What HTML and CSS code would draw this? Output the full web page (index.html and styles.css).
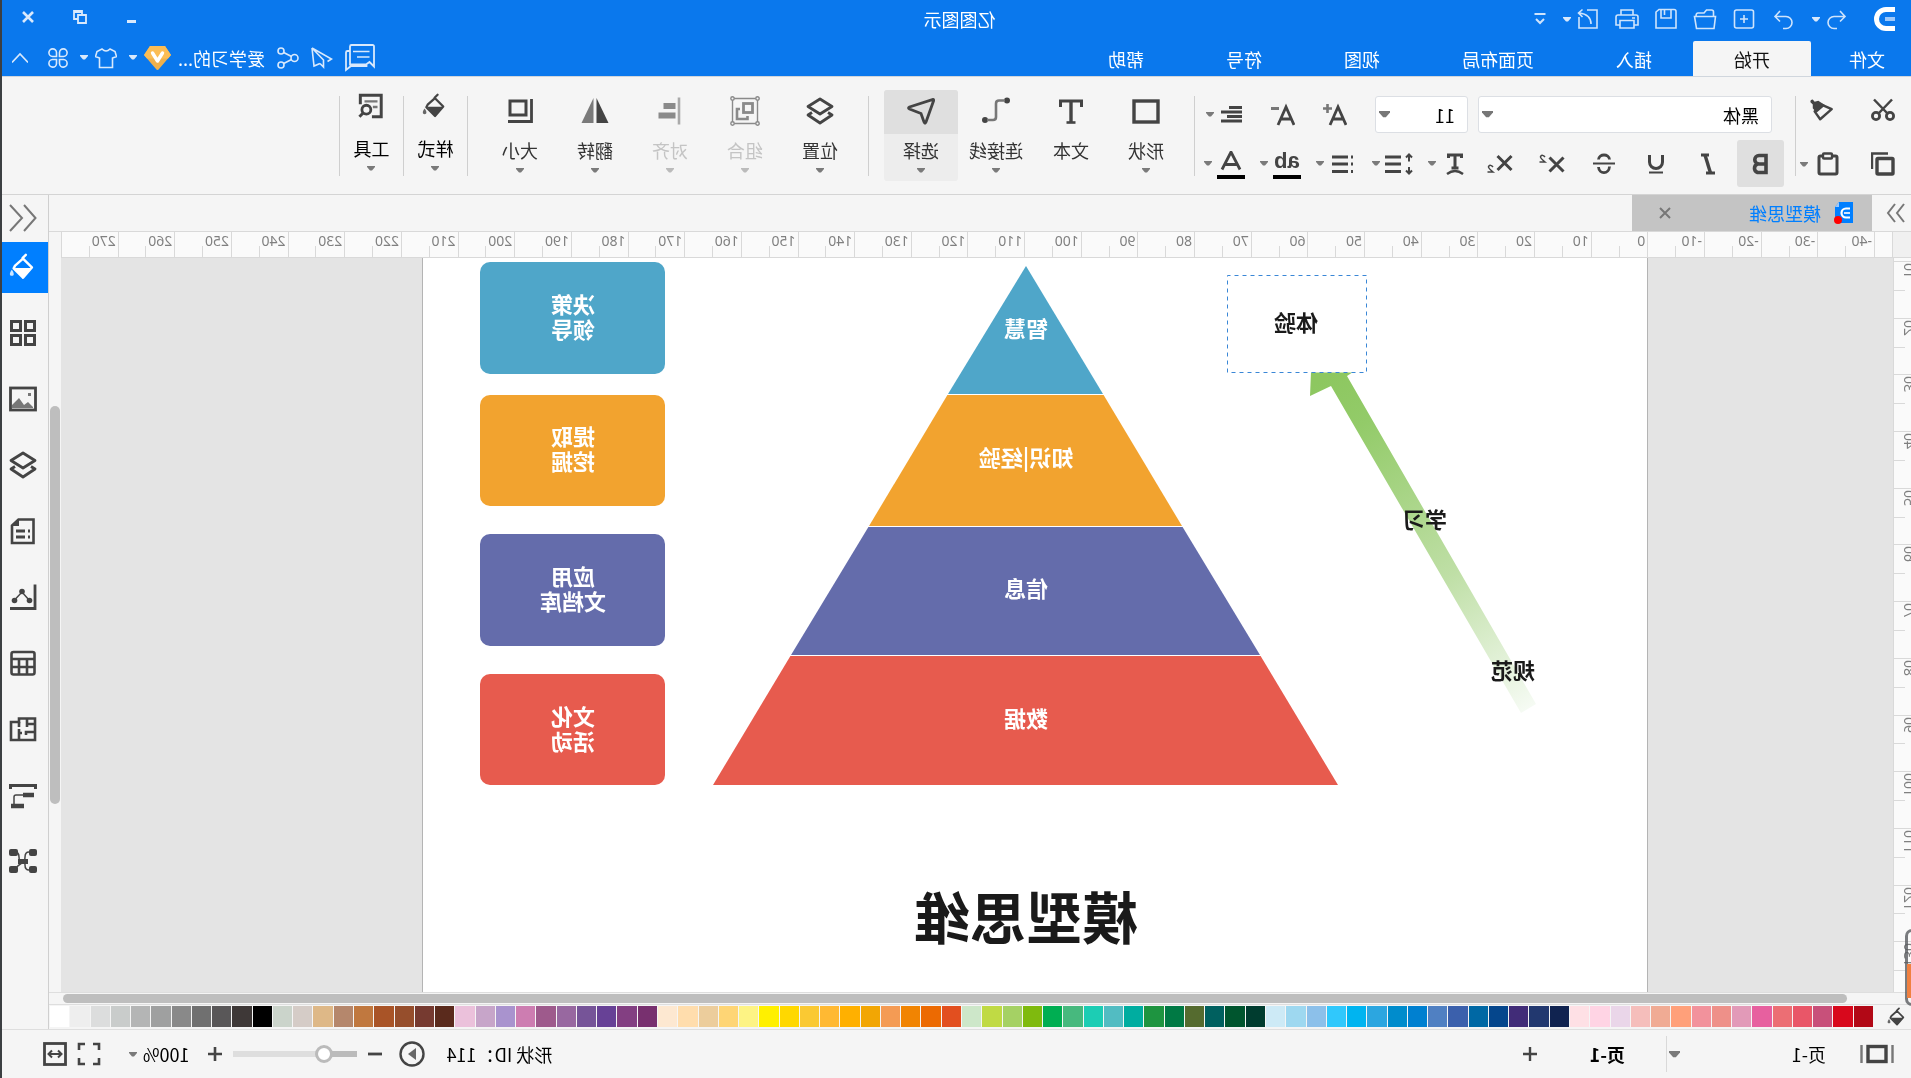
FILE: index.html
```html
<!DOCTYPE html>
<html lang="zh-CN">
<head>
<meta charset="utf-8">
<title>亿图图示</title>
<link rel="stylesheet" href="styles.css">
</head>
<body>
<svg class="defs" aria-hidden="true">
  <symbol id="caret" viewBox="0 0 8 5"><path d="M0 0H8V1L5 4.500H3L0 1Z" fill="currentColor"/></symbol>
  <symbol id="bucket" viewBox="0 0 28 30"><path d="M11 2l3.500 3.500M14 6L4.500 15.500 14 26.500 24 16.500 22.500 13.500 14 6Z" fill="none" stroke="currentColor" stroke-width="2.600" stroke-linejoin="round" stroke-linecap="round"/><path d="M5 16h18L14 27Z" fill="currentColor"/><path d="M26 18c3 4 2.500 6.500 0 6.500s-3-2.500 0-6.500Z" fill="currentColor" opacity=".8"/></symbol>
  <symbol id="layers" viewBox="0 0 28 28"><path d="M14 2L26 9.500 14 17 2 9.500Z" fill="none" stroke="currentColor" stroke-width="2.800" stroke-linejoin="round"/><path d="M6 15.500L2 18l12 8 12-8-4-2.500" fill="none" stroke="currentColor" stroke-width="2.800" stroke-linejoin="round"/></symbol>
</svg>
<div class="window">
  <header class="head">
    <div class="titlebar">
      <div class="quick">
        <svg class="logo" viewBox="0 0 22 24"><path d="M0 2.500H9A9.500 9.500 0 0 1 9 21.500H0" fill="none" stroke="#fff" stroke-width="5"/><path d="M0 12H10" stroke="#9fc9fa" stroke-width="4"/></svg>
        <div class="split"><button class="ib" aria-label="撤销"><svg viewBox="0 0 24 24"><path d="M9 4L4 9.500l5 5M4 9.500h11a6 6 0 0 1 0 12h-3"/></svg></button><button class="cb" aria-label="撤销列表"><svg class="caret"><use href="#caret"/></svg></button></div>
        <button class="ib" aria-label="重做"><svg viewBox="0 0 24 24"><path d="M15 4l5 5.500-5 5M20 9.500H9a6 6 0 0 0 0 12h3"/></svg></button>
        <button class="ib" aria-label="新建"><svg viewBox="0 0 24 24"><rect x="2.500" y="3" width="19" height="18" rx="2"/><path d="M12 8v8M8 12h8"/></svg></button>
        <button class="ib" aria-label="打开"><svg viewBox="0 0 24 24"><path d="M3 21.500L1.500 9.500h18l3 0-2 12H3ZM3.500 9V5q0-2 2-2h5l2.500 3h6q2 0 2 3"/></svg></button>
        <button class="ib" aria-label="保存"><svg viewBox="0 0 24 24"><path d="M4 2.500H19l3 2.500V21H2V4.500q0-2 2-2ZM7 3v8h10V3M13.500 3v5"/></svg></button>
        <button class="ib" aria-label="打印"><svg viewBox="0 0 24 24"><path d="M6 8V3h12v5M5 18H1V10q0-2 2-2h18q2 0 2 2v8h-4M5 13.500h14v7.500H5ZM4 11h3"/></svg></button>
        <div class="split"><button class="ib" aria-label="导出"><svg viewBox="0 0 24 24"><path d="M13 3H3v18h18V10M9 17c0-6 3-10 12-11M17.500 2.500L21.500 6l-4 4"/></svg></button><button class="cb" aria-label="导出列表"><svg class="caret"><use href="#caret"/></svg></button></div>
        <button class="ib narrow" aria-label="自定义"><svg viewBox="0 0 12 24"><path d="M0.500 7h11M2 12l4 4 4-4" stroke-width="2"/></svg></button>
      </div>
      <h1>亿图图示</h1>
      <div class="controls">
        <button aria-label="最小化"><svg viewBox="0 0 14 14"><path d="M3 11.500h9" stroke-width="3"/></svg></button>
        <button aria-label="还原"><svg viewBox="0 0 14 14"><path d="M1 5h8v8H1ZM9 9h4V1H5v4M5 2h8" stroke-width="1.800"/></svg></button>
        <button aria-label="关闭"><svg viewBox="0 0 14 14"><path d="M2 2l10 10M12 2L2 12" stroke-width="2.600"/></svg></button>
      </div>
    </div>
    <div class="menubar">
      <nav class="tabs">
        <a class="file" href="#">文件</a><a class="on" href="#">开始</a><a href="#">插入</a><a class="wide" href="#">页面布局</a><a href="#">视图</a><a href="#">符号</a><a href="#">帮助</a>
      </nav>
      <div class="account">
        <button aria-label="消息"><svg width="30" height="28" viewBox="0 0 30 28"><path d="M1 2.500q0-1.500 1.500-1.500h21q1.500 0 1.500 1.500v18H9L5.500 18 1 22.500Z M25 7h2.500q1.500 0 1.500 1.500V26l-5-4H8.500V20" stroke-width="1.800"/><path d="M5.500 7.500H22M5.500 13H18"/></svg></button>
        <button aria-label="发送"><svg width="22" height="22" viewBox="0 0 22 22"><path d="M21 1L1.500 12l4 2.500M21 1l-2 18-6-2.500M21 1L9.500 13v7l3.500-3.500"/></svg></button>
        <button aria-label="分享"><svg width="22" height="22" viewBox="0 0 22 22"><circle cx="4.500" cy="11" r="3.500"/><circle cx="18" cy="4" r="3"/><circle cx="18" cy="18" r="3"/><path d="M7.500 9.500L15.300 5.500M7.500 12.500l7.800 4"/></svg></button>
        <div class="user"><a href="#">爱学习的...</a>
          <svg class="gem" width="27" height="24" viewBox="0 0 27 24"><path d="M6 0H21L27 9 15 23q-1.500 2-3 0L0 9Z" fill="#efb04c"/><path d="M6 0H21L27 9 24 12.500H3L0 9Z" fill="#fbbd56"/><path d="M8.500 7l5 8 5-8" fill="none" stroke="#fff" stroke-width="3.400" stroke-linecap="round" stroke-linejoin="round"/></svg>
          <svg class="caret"><use href="#caret"/></svg></div>
        <div class="skin"><button aria-label="皮肤"><svg width="22" height="22" viewBox="0 0 22 22"><path d="M7 2q4 4 8 0l5 2.500 1.500 5L17.500 11V20.500H4.500V11L.5 9.500 2 4.500Z"/></svg></button><svg class="caret"><use href="#caret"/></svg></div>
        <button aria-label="应用"><svg width="20" height="20" viewBox="0 0 20 20"><path d="M8.500 8.500H4.500A3.800 3.800 0 1 1 8.500 4.500ZM11.500 8.500V4.500A3.800 3.800 0 1 1 15.500 8.500ZM8.500 11.500V15.500A3.800 3.800 0 1 1 4.500 11.500ZM11.500 11.500H15.500A3.800 3.800 0 1 1 11.500 15.500Z"/></svg></button>
        <button class="fold" aria-label="收起"><svg width="16" height="12" viewBox="0 0 16 12"><path d="M0 10.500L8 2l8 8.500"/></svg></button>
      </div>
    </div>
  </header>

  <section class="ribbon">
    <div class="clip">
      <button aria-label="剪切"><svg viewBox="0 0 24 24"><path d="M3 1.500L17 16M21 1.500L7 16" stroke-width="2.500"/><circle cx="5" cy="18" r="3.600" stroke-width="2.800"/><circle cx="19" cy="18" r="3.600" stroke-width="2.800"/></svg></button>
      <button aria-label="格式刷"><svg viewBox="0 0 26 24"><path d="M2.500 11L13 6.500 21 13.500 15 22Z" stroke-width="2.600" stroke-linejoin="round"/><path d="M10 6.500L17 2l4 1 2-2.500q3 0 2.500 3L23 6v4l-4 5L12 9Z" fill="currentColor" stroke="none"/></svg></button>
      <button aria-label="复制"><svg viewBox="0 0 24 24"><path d="M7 1.500H23V17" stroke-width="2.400"/><rect x="2" y="6.500" width="16" height="15.500" rx="1" stroke-width="3.400"/></svg></button>
      <div class="paste"><button aria-label="粘贴"><svg viewBox="0 0 24 24"><rect x="3" y="4" width="18" height="18" rx="1.500" stroke-width="3"/><rect x="8" y="1.500" width="9" height="5" rx="1" stroke-width="2.400" fill="#f5f5f5"/></svg></button><svg class="caret"><use href="#caret"/></svg></div>
    </div>
    <i class="sep"></i>
    <div class="font">
      <div class="row top">
        <div class="picks">
          <span class="pick family"><select aria-label="字体"><option>黑体</option></select><svg><use href="#caret"/></svg></span>
          <span class="pick size"><select aria-label="字号"><option>11</option></select><svg><use href="#caret"/></svg></span>
        </div>
        <button class="fi" aria-label="增大字号"><svg viewBox="0 0 24 24"><path d="M1 22L9 4l8 18M4 16h10" stroke-width="2.800"/><path d="M19.500 1v9M15 5.500h9" stroke="#777" stroke-width="2.600"/></svg></button>
        <button class="fi" aria-label="减小字号"><svg viewBox="0 0 24 24"><path d="M1 22L9 4l8 18M4 16h10" stroke-width="2.800"/><path d="M16 5.500h8" stroke="#777" stroke-width="3"/></svg></button>
        <div class="pair"><button class="fi" aria-label="对齐"><svg viewBox="0 0 24 24"><path d="M1 4.500h13M1 9h21M1 13.500h15M1 18h21" stroke-width="2.800"/></svg></button><svg class="caret"><use href="#caret"/></svg></div>
      </div>
      <div class="row bottom">
        <div class="marks">
          <button class="on" aria-label="加粗"><svg viewBox="0 0 28 28"><path d="M8 5.500h7a4 4 0 0 1 0 8.500H8ZM8 14h8.500a4.500 4.500 0 0 1 0 8.500H8Z" stroke-width="3.600"/></svg></button>
          <button aria-label="斜体"><svg viewBox="0 0 28 28"><path d="M7 23h9M13 5h8" stroke-width="3"/><path d="M17 5L11.500 23" stroke-width="3.400"/></svg></button>
          <button aria-label="下划线"><svg viewBox="0 0 28 28"><path d="M7.500 5v7a6 6 0 0 0 13 0V5" stroke-width="3"/><path d="M7 22.500h14"/></svg></button>
          <button aria-label="删除线"><svg viewBox="0 0 28 28"><path d="M19.500 9.500C19 3.500 9 3.500 8.500 9.500M8.500 16.500C9 24.500 19 24.500 19.500 17" stroke-width="2.800"/><path d="M3 13.500h22"/></svg></button>
          <button aria-label="上标"><svg viewBox="0 0 28 28"><path d="M2.500 7.500l14 14M16.500 7.500l-14 14" stroke-width="3"/><path d="M21 7q2.500-3 4.500-.5Q26 8 21 12h5.500" stroke-width="1.500"/></svg></button>
          <button aria-label="下标"><svg viewBox="0 0 28 28"><path d="M2.500 6l14 14M16.500 6l-14 14" stroke-width="3"/><path d="M21 17q2.500-3 4.500-.5Q26 18 21 22h5.500" stroke-width="1.500"/></svg></button>
        </div>
        <div class="splits">
          <div class="pair"><button aria-label="文字效果"><svg viewBox="0 0 28 28"><path d="M7.500 8V5h13V8M14 5V18M10.500 18h7" stroke-width="3"/><path d="M6 24Q14 18 22 24" stroke-width="2.400"/></svg></button><svg class="caret"><use href="#caret"/></svg></div>
          <div class="pair"><button aria-label="行距"><svg viewBox="0 0 28 28"><path d="M12 7h16M12 14h16M12 21.500h16" stroke-width="2.800"/><path d="M4 4.500v7M1 7.500l3-3 3 3M4 17v7M1 20.500l3 3 3-3"/></svg></button><svg class="caret"><use href="#caret"/></svg></div>
          <div class="pair"><button aria-label="项目符号"><svg viewBox="0 0 28 28"><path d="M9 7h16M9 14h16M9 21.500h16M4 7h2M4 14h2M4 21.500h2" stroke-width="2.800"/></svg></button><svg class="caret"><use href="#caret"/></svg></div>
          <div class="pair"><button class="ink" aria-label="高亮颜色"><span>ab</span></button><svg class="caret"><use href="#caret"/></svg></div>
          <div class="pair"><button class="ink dark" aria-label="字体颜色"><svg viewBox="0 0 28 20"><path d="M5 18.500L14 1l9 17.500M8 13.500h12" stroke-width="2.800"/></svg></button><svg class="caret"><use href="#caret"/></svg></div>
        </div>
      </div>
    </div>
    <i class="sep"></i>
    <div class="tools">
      <button class="tool"><span class="pic"><svg viewBox="0 0 28 28"><rect x="2" y="4" width="24" height="21" stroke-width="3.400"/></svg></span><span class="cap">形状</span><svg class="caret"><use href="#caret"/></svg></button>
      <button class="tool"><span class="pic"><svg viewBox="0 0 28 28"><path d="M3.500 10V4h21v6" stroke-width="3"/><path d="M14 4V25" stroke-width="3.400"/><path d="M9.500 25.500h9" stroke-width="2.600"/></svg></span><span class="cap">文本</span></button>
      <button class="tool"><span class="pic"><svg viewBox="0 0 28 28"><circle cx="3" cy="3.500" r="3" fill="currentColor" stroke="none"/><circle cx="25" cy="23" r="3" fill="currentColor" stroke="none"/><path d="M5 3.500h6q3 0 3 3V20q0 3 3 3h6" stroke="#777" stroke-width="2.600"/></svg></span><span class="cap">连接线</span><svg class="caret"><use href="#caret"/></svg></button>
      <button class="tool on"><span class="pic"><svg viewBox="0 0 28 28"><path d="M2 2.500q-1 0-.5 1.500L9 25q1 2.500 2 0l3-8.500L25.500 12q2-1 0-2Z" stroke-width="2.800"/></svg></span><span class="cap">选择</span><svg class="caret"><use href="#caret"/></svg></button>
    </div>
    <i class="sep"></i>
    <div class="tools">
      <button class="tool"><span class="pic"><svg><use href="#layers"/></svg></span><span class="cap">位置</span><svg class="caret"><use href="#caret"/></svg></button>
      <button class="tool" disabled><span class="pic wide"><svg viewBox="0 0 30 30"><path d="M2.500 2.500h25v25h-25Z" stroke-width="1.400"/><rect x="7.500" y="7.500" width="9" height="9" stroke-width="2.800"/><path d="M20 13H23V23H12.500V20" stroke-width="2.600"/><g fill="#f5f5f5" stroke-width="1.400"><circle cx="2.500" cy="2.500" r="1.700"/><circle cx="27.500" cy="2.500" r="1.700"/><circle cx="2.500" cy="27.500" r="1.700"/><circle cx="27.500" cy="27.500" r="1.700"/></g></svg></span><span class="cap">组合</span><svg class="caret"><use href="#caret"/></svg></button>
      <button class="tool" disabled><span class="pic"><svg viewBox="0 0 28 28"><path d="M5 .5V27.500" stroke-width="2.600" opacity=".7"/><path d="M8.500 9h12M8.500 18.500h17" stroke-width="6"/></svg></span><span class="cap">对齐</span><svg class="caret"><use href="#caret"/></svg></button>
      <button class="tool"><span class="pic"><svg viewBox="0 0 28 28"><path d="M12.500 1V26H.5Z" fill="currentColor" stroke="none"/><path d="M15.500 1V26h12Z" fill="#7a7a7a" stroke="none"/></svg></span><span class="cap">翻转</span><svg class="caret"><use href="#caret"/></svg></button>
      <button class="tool"><span class="pic"><svg viewBox="0 0 28 28"><rect x="8" y="4" width="16" height="14" stroke-width="3"/><path d="M2.500 2V24.500H26" stroke-width="2.800"/></svg></span><span class="cap">大小</span><svg class="caret"><use href="#caret"/></svg></button>
    </div>
    <i class="sep"></i>
    <button class="tool tall"><span class="pic"><svg><use href="#bucket"/></svg></span><span class="cap">样式</span><svg class="caret"><use href="#caret"/></svg></button>
    <i class="sep"></i>
    <button class="tool tall"><span class="pic"><svg viewBox="0 0 28 28"><path d="M25.500 12V2.500H3V25.500h10" stroke-width="3.200"/><path d="M7 9h14M7 15h5" stroke="#777" stroke-width="2.600"/><circle cx="19" cy="18" r="4.800" stroke-width="3"/><path d="M22.500 21.500l4 4" stroke-width="3.200"/></svg></span><span class="cap">工具</span><svg class="caret"><use href="#caret"/></svg></button>
    <i class="sep"></i>
  </section>

  <div class="work">
    <main class="main">
      <div class="docs">
        <button class="expand" aria-label="展开符号库"><svg width="20" height="20" viewBox="0 0 20 20"><path d="M2 1l7 9-7 9M11 1l7 9-7 9"/></svg></button>
        <div class="doc">
          <svg width="20" height="22" viewBox="0 0 20 22"><path d="M1 0H15L19 5V21H1Z" fill="#007fff" stroke="none"/><path d="M15 0L19 5h-4Z" fill="#9fc9fa" stroke="none"/><path d="M4 6.500h4a4.500 4.500 0 0 1 0 9H4" fill="none" stroke="#fff" stroke-width="2.200"/><path d="M4 11h6" stroke="#cfe5ff" stroke-width="2"/><circle cx="16" cy="18" r="4" fill="#f00" stroke="none"/></svg>
          <a href="#">模型思维</a>
          <button aria-label="关闭文档"><svg width="12" height="12" viewBox="0 0 12 12"><path d="M1 1l10 10M11 1L1 11"/></svg></button>
        </div>
      </div>
      <div class="stage">
        <div class="corner"></div>
        <div class="hruler" id="hruler"></div>
        <div class="vruler" id="vruler"></div>
        <div class="canvas">
          <div class="page">
            <svg class="drawing" viewBox="-1 0 1222 735" width="1222" height="735">
              <defs><linearGradient id="fade" gradientUnits="userSpaceOnUse" x1="320" y1="120" x2="118" y2="452"><stop offset="0" stop-color="#8dc760"/><stop offset=".15" stop-color="#93cb69"/><stop offset=".6" stop-color="#bfdfa6"/><stop offset="1" stop-color="#f6fbf4"/></linearGradient></defs>
              <path fill="url(#fade)" d="M336 138L335 114H293L299 118 110 446 125 455 315 128Z"/>
              <rect x="279.500" y="17.500" width="139" height="97" fill="#fff" stroke="#3a87d6" stroke-dasharray="4 4"/>
              <path fill="#4fa6c9" d="M620 8L698 136H543Z"/>
              <path fill="#f2a32f" d="M543 136H698L777 268H464Z"/>
              <path fill="#646cab" d="M464 268H777L855 397H386Z"/>
              <path fill="#e75b4e" d="M386 397H855L933 527H308Z"/>
              <path d="M540 136.500H700M460 268.500H780M380 397.500H860" stroke="#fff"/>
              <rect x="981" y="4" width="185" height="112" rx="10" fill="#4fa6c9"/>
              <rect x="981" y="137" width="185" height="111" rx="10" fill="#f2a32f"/>
              <rect x="981" y="276" width="185" height="112" rx="10" fill="#646cab"/>
              <rect x="981" y="416" width="185" height="111" rx="10" fill="#e75b4e"/>
              <g class="ink-dark"><text x="350" y="73">体验</text><text x="221" y="270">学习</text><text x="133" y="421">规范</text></g>
              <g class="ink-light">
                <text x="620" y="79">智慧</text><text x="620" y="208">知识|经验</text><text x="620" y="339">信息</text><text x="620" y="469">数据</text>
                <text x="1073" y="55">决策</text><text x="1073" y="80">领导</text>
                <text x="1073" y="187">提取</text><text x="1073" y="212">挖掘</text>
                <text x="1073" y="327">应用</text><text x="1073" y="352">文档库</text>
                <text x="1073" y="467">文化</text><text x="1073" y="492">活动</text>
              </g>
              <text class="headline" x="620" y="681">模型思维</text>
            </svg>
          </div>
        </div>
        <div class="vscroll"><i></i></div>
      </div>
      <div class="hscroll"><i></i></div>
      <div class="palette">
        <button class="fill" aria-label="填充"><svg><use href="#bucket"/></svg></button>
        <div class="swatches" id="swatches"></div>
      </div>
    </main>
    <aside class="side">
      <button class="collapse" aria-label="收起面板"><svg width="28" height="28" viewBox="0 0 28 28"><path d="M13 1L1.500 14 13 27M27 1L15 14 27 27"/></svg></button>
      <button class="on" aria-label="填充"><svg><use href="#bucket"/></svg></button>
      <button aria-label="符号"><svg viewBox="0 0 28 28"><path d="M2.500 2.500h9v9H2.500ZM16.500 2.500h9v9H16.500ZM2.500 16.500h9v9H2.500ZM16.500 16.500h9v9H16.500Z" stroke-width="3"/></svg></button>
      <button aria-label="图片"><svg viewBox="0 0 28 28"><rect x="1.500" y="3" width="25" height="22" stroke-width="2.800"/><path d="M4 22l5-5 4 3 5-7 7 7v3H4Z" fill="#777" stroke="none"/><path d="M6 8h3v3H6Z" fill="#777" stroke="none"/></svg></button>
      <button aria-label="图层"><svg><use href="#layers"/></svg></button>
      <button aria-label="备注"><svg viewBox="0 0 28 28"><path d="M3.500 2.500h15L25 8.500V26H3.500Z" stroke-width="2.600"/><path d="M18 2v7h7Z" fill="currentColor" stroke="none"/><path d="M12 14h9M12 20h9M7 14h2M7 20h2" stroke-width="2.800"/></svg></button>
      <button aria-label="图表"><svg viewBox="0 0 28 28"><path d="M2 1.500V25.500H27" stroke-width="2.800"/><path d="M8 17l7-8 7.500 8" stroke-width="1.500"/><g fill="currentColor" stroke="none"><circle cx="7.500" cy="17.500" r="2.800"/><circle cx="15" cy="8.500" r="2.800"/><circle cx="22.500" cy="17.500" r="2.800"/></g></svg></button>
      <button aria-label="表格"><svg viewBox="0 0 28 28"><rect x="2.500" y="3" width="23" height="22.500" rx="2" stroke-width="2.600"/><path d="M3 10h23M3 18h23M10 10v15M18 10v15" stroke-width="2.600"/></svg></button>
      <button aria-label="平面图"><svg viewBox="0 0 28 28"><path d="M2 3.500H18V7h8V25H2Z" stroke-width="2.600"/><path d="M10 3v6H2M2 17h9v3M18 7v5M18 14v11M10 9v3M18 18h-3" stroke-width="2.600"/></svg></button>
      <button aria-label="甘特图"><svg viewBox="0 0 28 28"><path d="M1.500 8V4.500h25V8" stroke-width="3"/><path d="M14 14h7q2 0 2 2v7" stroke-width="1.500"/><path d="M3 14h11M13 25h13" stroke-width="4.400"/></svg></button>
      <button aria-label="脑图"><svg viewBox="0 0 28 28"><path d="M8 5q4 0 4 5t3 5 3-5 4-5M8 23q4 0 4-5t2-3 4 3 4 5" stroke-width="1.500"/><g fill="currentColor" stroke="none"><rect x="0" y="2" width="8" height="7" rx="2"/><rect x="19" y="2" width="9" height="7" rx="2"/><rect x="0" y="19" width="8" height="7" rx="2"/><rect x="19" y="19" width="9" height="7" rx="2"/><rect x="9" y="12" width="10" height="5"/></g></svg></button>
    </aside>
  </div>

  <footer class="status">
    <div class="pages">
      <button aria-label="页面视图"><svg width="34" height="20" viewBox="0 0 34 20"><path d="M1.500 1v18M32.500 1v18" stroke="#777" stroke-width="2.400"/><rect x="8" y="2.500" width="18" height="15" stroke-width="3.400"/></svg></button>
      <button class="pagepick"><span>页-1</span><svg class="caret big"><use href="#caret"/></svg></button>
      <i></i>
      <a href="#">页-1</a>
      <button aria-label="添加页"><svg width="16" height="16" viewBox="0 0 16 16"><path d="M8 1v14M1 8h14" stroke-width="2.400"/></svg></button>
    </div>
    <div class="zoom">
      <span>形状 ID：114</span>
      <button aria-label="演示"><svg width="26" height="28" viewBox="0 0 26 28"><circle cx="13" cy="14" r="11.500" stroke-width="2.400"/><path d="M9 14l8 6V8Z" transform="matrix(-1 0 0 1 26 0)" fill="#666" stroke="none"/></svg></button>
      <button aria-label="缩小"><svg width="16" height="16" viewBox="0 0 16 16"><path d="M1 8h14" stroke-width="2.800"/></svg></button>
      <input type="range" min="0" max="100" value="22" aria-label="缩放">
      <button aria-label="放大"><svg width="16" height="16" viewBox="0 0 16 16"><path d="M8 1v14M1 8h14" stroke-width="2.600"/></svg></button>
      <button class="percent"><span>100%</span><svg class="caret"><use href="#caret"/></svg></button>
      <button aria-label="全屏"><svg width="24" height="24" viewBox="0 0 24 24"><path d="M2 8V2h6M16 2h6v6M22 16v6h-6M8 22H2v-6" stroke-width="2.600"/></svg></button>
      <button aria-label="适合宽度"><svg width="24" height="24" viewBox="0 0 24 24"><rect x="1.500" y="1.500" width="21" height="21" stroke-width="2.800"/><path d="M6 12h12M9 8.500L5.500 12 9 15.500M15 8.500l3.500 3.500-3.500 3.500"/></svg></button>
    </div>
  </footer>
  <div class="peek"><i></i></div>
</div>
<script src="script.js"></script>
</body>
</html>
```
FILE: styles.css
```css
* { box-sizing: border-box; }
html, body { height: 100%; margin: 0; overflow: hidden; }
body {
  background: #3c3f42;
  font: 18px/24px "Noto Sans CJK SC", "Noto Sans", sans-serif;
  color: #111;
}
button, select { font: inherit; color: inherit; }
button { display: flex; align-items: center; justify-content: center; padding: 0; border: 0; background: none; }
a { color: inherit; text-decoration: none; }
svg { display: block; fill: none; stroke: currentColor; stroke-width: 2; }
svg use, symbol { stroke: none; }
.defs { position: absolute; width: 0; height: 0; }
.caret { width: 8px; height: 5px; flex: none; color: #7a7a7a; }

/* The whole window is shown mirrored. */
.window {
  position: relative;
  display: flex;
  flex-direction: column;
  height: 100vh;
  margin-left: 2px;
  background: #f5f5f5;
  transform: scaleX(-1);
}

/* Header */
.head { background: #0a78ed; color: #fff; border-bottom: 1px solid #d0d6dd; }
.head svg { stroke-width: 1.6; }
.head .caret { color: #d9e9fc; }
.titlebar { display: grid; grid-template-columns: 1fr auto 1fr; align-items: center; height: 41px; padding-bottom: 3px; }
.quick { display: flex; align-items: center; gap: 15px; padding-left: 16px; color: #cfe4fc; }
.logo { width: 22px; height: 24px; margin-right: 9px; }
.ib svg { width: 24px; height: 24px; }
.ib.narrow svg { width: 12px; }
.split { display: flex; align-items: center; gap: 2px; }
.cb { width: 13px; height: 24px; }
h1 { margin: 0 6px 0 0; font-size: 18px; font-weight: 400; }
.controls { display: flex; justify-content: flex-end; padding-bottom: 4px; color: #d9e9fc; }
.controls button { width: 52px; height: 32px; }
.controls svg { width: 14px; height: 14px; }
.menubar { display: flex; justify-content: space-between; height: 35px; }
.tabs { display: flex; }
.tabs a { display: flex; align-items: center; justify-content: center; width: 118px; }
.tabs .file { width: 88px; margin-right: 12px; }
.tabs .wide { width: 154px; }
.tabs .on { background: #f5f5f5; color: #111; border-radius: 2px 2px 0 0; }
.account { display: flex; align-items: center; gap: 12px; padding: 0 10px 2px 0; color: #d9e9fc; }
.user, .skin { display: flex; align-items: center; gap: 7px; color: #fff; }
.skin button { color: #d9e9fc; }
.gem { stroke: none; }
.fold { margin-left: 8px; }

/* Ribbon */
.ribbon { display: flex; height: 118px; border-bottom: 1px solid #d4d4d4; color: #444; }
.sep { width: 1px; height: 80px; margin-top: 19px; background: #cfcfcf; flex: none; }
.clip { display: grid; grid-template-columns: 61px 44px; grid-auto-rows: 54px; align-content: start; padding: 6px 0 0 10px; }
.clip > button { width: 36px; }
.clip svg:not(.caret) { width: 24px; height: 24px; }
.paste { display: flex; align-items: center; gap: 8px; }
.font { padding: 19px 9px 0 11px; }
.row { display: flex; align-items: center; }
.top { height: 37px; gap: 28px; padding-left: 12px; }
.picks { display: flex; gap: 10px; }
.pick { position: relative; color: #000; }
.pick select { appearance: none; width: 100%; height: 37px; padding: 0 12px; border: 1px solid #dcdfe4; border-radius: 3px; background: #fff; }
.pick svg { position: absolute; right: 4px; top: 15px; width: 11px; height: 7px; color: #777; pointer-events: none; }
.family { width: 294px; }
.size { width: 93px; }
.fi svg { width: 24px; height: 24px; }
.bottom { height: 47px; margin-top: 7px; gap: 8px; }
.marks { display: flex; gap: 5px; }
.marks button { width: 47px; height: 47px; border-radius: 3px; }
.marks .on { background: #dfdfdf; }
.marks svg, .pair button > svg { width: 28px; height: 28px; }
.top .pair button > svg { width: 24px; height: 24px; }
.splits { display: flex; gap: 15px; }
.pair { display: flex; align-items: center; gap: 5px; }
.ink { width: 28px; height: 30px; align-items: flex-start; border-bottom: 4px solid #000; font: 700 22px/24px "Liberation Sans", sans-serif; }
.pair .ink > svg { height: 20px; margin-top: 2px; }
.tools { display: flex; gap: 1px; padding: 0 15px 0 11px; }
.tool { display: flex; flex-direction: column; justify-content: flex-start; width: 74px; height: 91px; margin-top: 13px; border-radius: 3px; color: #333; }
.pic { display: flex; align-items: center; justify-content: center; width: 100%; height: 44px; padding-bottom: 2px; color: #444; border-radius: 3px 3px 0 0; }
.pic svg { width: 28px; height: 28px; }
.pic.wide svg { width: 30px; height: 30px; }
.cap { height: 34px; line-height: 32px; white-space: nowrap; }
.tool.on { background: #ededed; }
.tool.on .pic { background: #dfdfdf; }
.tool:disabled { color: #c4c4c4; }
.tool:disabled .pic { color: #8a8a8a; }
.tool:disabled .caret { color: #bbb; }
.tool.tall { width: 63px; color: #000; }
.tall .pic { height: 34px; margin-bottom: 8px; }
.tall .pic svg { width: 26px; height: 26px; }

/* Workspace */
.work { display: flex; flex: 1; min-height: 0; }
.main { display: flex; flex-direction: column; flex: 1; min-width: 0; }
.docs { display: flex; height: 36px; }
.expand { width: 39px; padding-right: 9px; color: #777; }
.doc { display: flex; align-items: center; width: 240px; padding: 0 27px 0 18px; background: #c4c4c4; color: #007fff; }
.doc a { margin-left: 13px; }
.doc button { margin-left: auto; color: #777; }
.stage { display: grid; grid-template: 26px 1fr / 18px 1fr 12px; flex: 1; min-height: 0; border-top: 1px solid #d9d9d9; overflow: hidden; }
.corner { background: #f0f0f0; border-bottom: 1px solid #d9d9d9; }
.hruler { display: flex; padding-left: 17px; background: #fafafa; border: 1px solid #d9d9d9; border-width: 0 1px 1px; overflow: hidden; }
.hruler span { position: relative; flex: 1; padding-left: 2px; border-left: 1px solid #d9d9d9; font: 14px/17px "Noto Sans", sans-serif; color: #808080; }
.hruler span::after { content: ""; position: absolute; left: 50%; top: 14px; bottom: 0; border-left: 1px solid #d9d9d9; }
.vruler { display: flex; flex-direction: column; padding-top: 3px; background: #fafafa; border-right: 1px solid #d9d9d9; overflow: hidden; min-height: 0; }
.vruler span { position: relative; flex: 1; border-top: 1px solid #d9d9d9; font: 14px/17px "Noto Sans", sans-serif; color: #808080; }
.vruler span:last-child { margin-bottom: -6px; }
.vruler span::after { content: ""; position: absolute; top: 50%; left: 6px; right: 0; border-top: 1px solid #d9d9d9; }
.vruler b { display: block; width: 17px; margin: 1px 0 0 -7px; font-weight: 400; writing-mode: vertical-rl; transform: rotate(180deg); }
.canvas { grid-column: 2; background: #e4e4e4; overflow: hidden; min-height: 0; }
.page { width: 1226px; height: 100%; margin-left: 245px; background: #fff; border: 1px solid #b4b4b4; border-width: 0 1px; overflow: hidden; }
.drawing { stroke: none; stroke-width: 1; }
.drawing text { font-size: 22px; font-weight: 700; text-anchor: middle; stroke: none; }
.ink-dark { fill: #1a1a1a; }
.ink-light { fill: #fff; }
.drawing .headline { font-size: 56px; fill: #1a1a1a; }
.vscroll { grid-area: 1 / 3 / 3 / 4; padding: 174px 1px 0; }
.vscroll i { display: block; height: 398px; border-radius: 5px; background: #bebebe; }
.hscroll { height: 13px; padding: 1px 14px 0 64px; border: 1px solid #dedede; border-width: 1px 0; }
.hscroll i { display: block; height: 9px; border-radius: 5px; background: #bebebe; }
.palette { display: flex; height: 24px; padding-top: 1px; }
.fill { width: 38px; height: 21px; padding-right: 10px; color: #444; }
.fill svg { width: 20px; height: 20px; }
.swatches { display: grid; grid-auto-flow: column; grid-auto-columns: 1fr; gap: 1px; flex: 1; height: 21px; padding-right: 1px; }
.swatches button { min-width: 0; }
.side { width: 47px; border-left: 1px solid #cfcfcf; color: #444; }
.side button { width: 100%; height: 51px; margin-bottom: 15px; padding: 0 0 2px 4px; }
.side svg { width: 28px; height: 28px; }
.side .collapse { height: 47px; margin: 0; color: #777; }
.side .on { background: #007fff; color: #fff; }

/* Status bar */
.status { display: flex; justify-content: space-between; height: 49px; border-top: 1px solid #dedede; color: #444; }
.pages, .zoom { display: flex; align-items: center; }
.pages { padding-left: 17px; }
.pages span, .pages a, .zoom span { color: #000; }
.pagepick { justify-content: space-between; width: 157px; margin-left: 34px; }
.caret.big { width: 11px; height: 7px; }
.pages i { width: 1px; height: 36px; margin: 0 41px 0 2px; background: #d9d9d9; }
.pages a { margin-right: 52px; font-weight: 700; }
.zoom { gap: 10px; padding-right: 41px; }
.zoom > span { margin-right: 12px; }
.zoom > span + button { margin-right: 6px; }
.percent { gap: 6px; margin: 0 18px 0 7px; }
.zoom input { appearance: none; width: 124px; height: 18px; margin: 0; background: linear-gradient(90deg, #bbb 33px, #dedede 33px) center / 100% 6px no-repeat; }
.zoom input::-webkit-slider-thumb { appearance: none; width: 18px; height: 18px; border: 3px solid #bbb; border-radius: 50%; background: #fff; }

/* Floating panel docked past the window edge */
.peek { position: absolute; left: -14px; bottom: 72px; width: 20px; height: 77px; padding: 32px 0 0; border: 3px solid rgba(90, 92, 96, .8); border-radius: 7px; }
.peek i { display: block; width: 15px; height: 34px; background: #f08040; }
```
FILE: script.js
```js
const palette = (
  "b20816 d8081c c8507a e95668 ec6e74 e7609f e29ab8 ee9089 f2929c ffa07a f0ab94 f5bebb ead6e9 ffd4e4 fee0e5 " +
  "102350 22386f 412c78 05468c 0068a4 3b60ac 5080c2 0080d0 008ccc 2ca6e0 00b4f0 30c8fc 8cc0ea 9ed8f0 cdeaf6 " +
  "003c2f 00552e 00605f 556b2f 007944 1e9440 00ada0 52bcc2 1ccdb4 47b97e 00ae52 7fba0e a5d164 c0da44 cde7c9 " +
  "e24f1f ec6a02 f18402 f49b54 f2a604 ffb000 ffb933 fac933 ffd800 fff000 fdf384 fed575 eccd9c ffddad fde8d1 " +
  "78306f 833f82 674196 765498 9868a0 9e5a8c cd7db1 a993ce c7a5c9 ebc1db 5a2a1c 763a30 964e2c a95427 c0783f " +
  "b5876c deb887 d5ccc7 cbd4cb 000000 3e3837 595758 707070 898989 9fa0a0 b4b5b5 c9cccb dcdddd eeeeee ffffff"
).split(" ");

document.getElementById("swatches").innerHTML = palette
  .map(c => `<button style="background:#${c}" aria-label="#${c}"></button>`).join("");

let marks = "";
for (let n = -40; n <= 270; n += 10) marks += `<span>${n}</span>`;
document.getElementById("hruler").innerHTML = marks;

marks = "";
for (let n = 10; n <= 130; n += 10) marks += `<span><b>${n}</b></span>`;
document.getElementById("vruler").innerHTML = marks;
```
